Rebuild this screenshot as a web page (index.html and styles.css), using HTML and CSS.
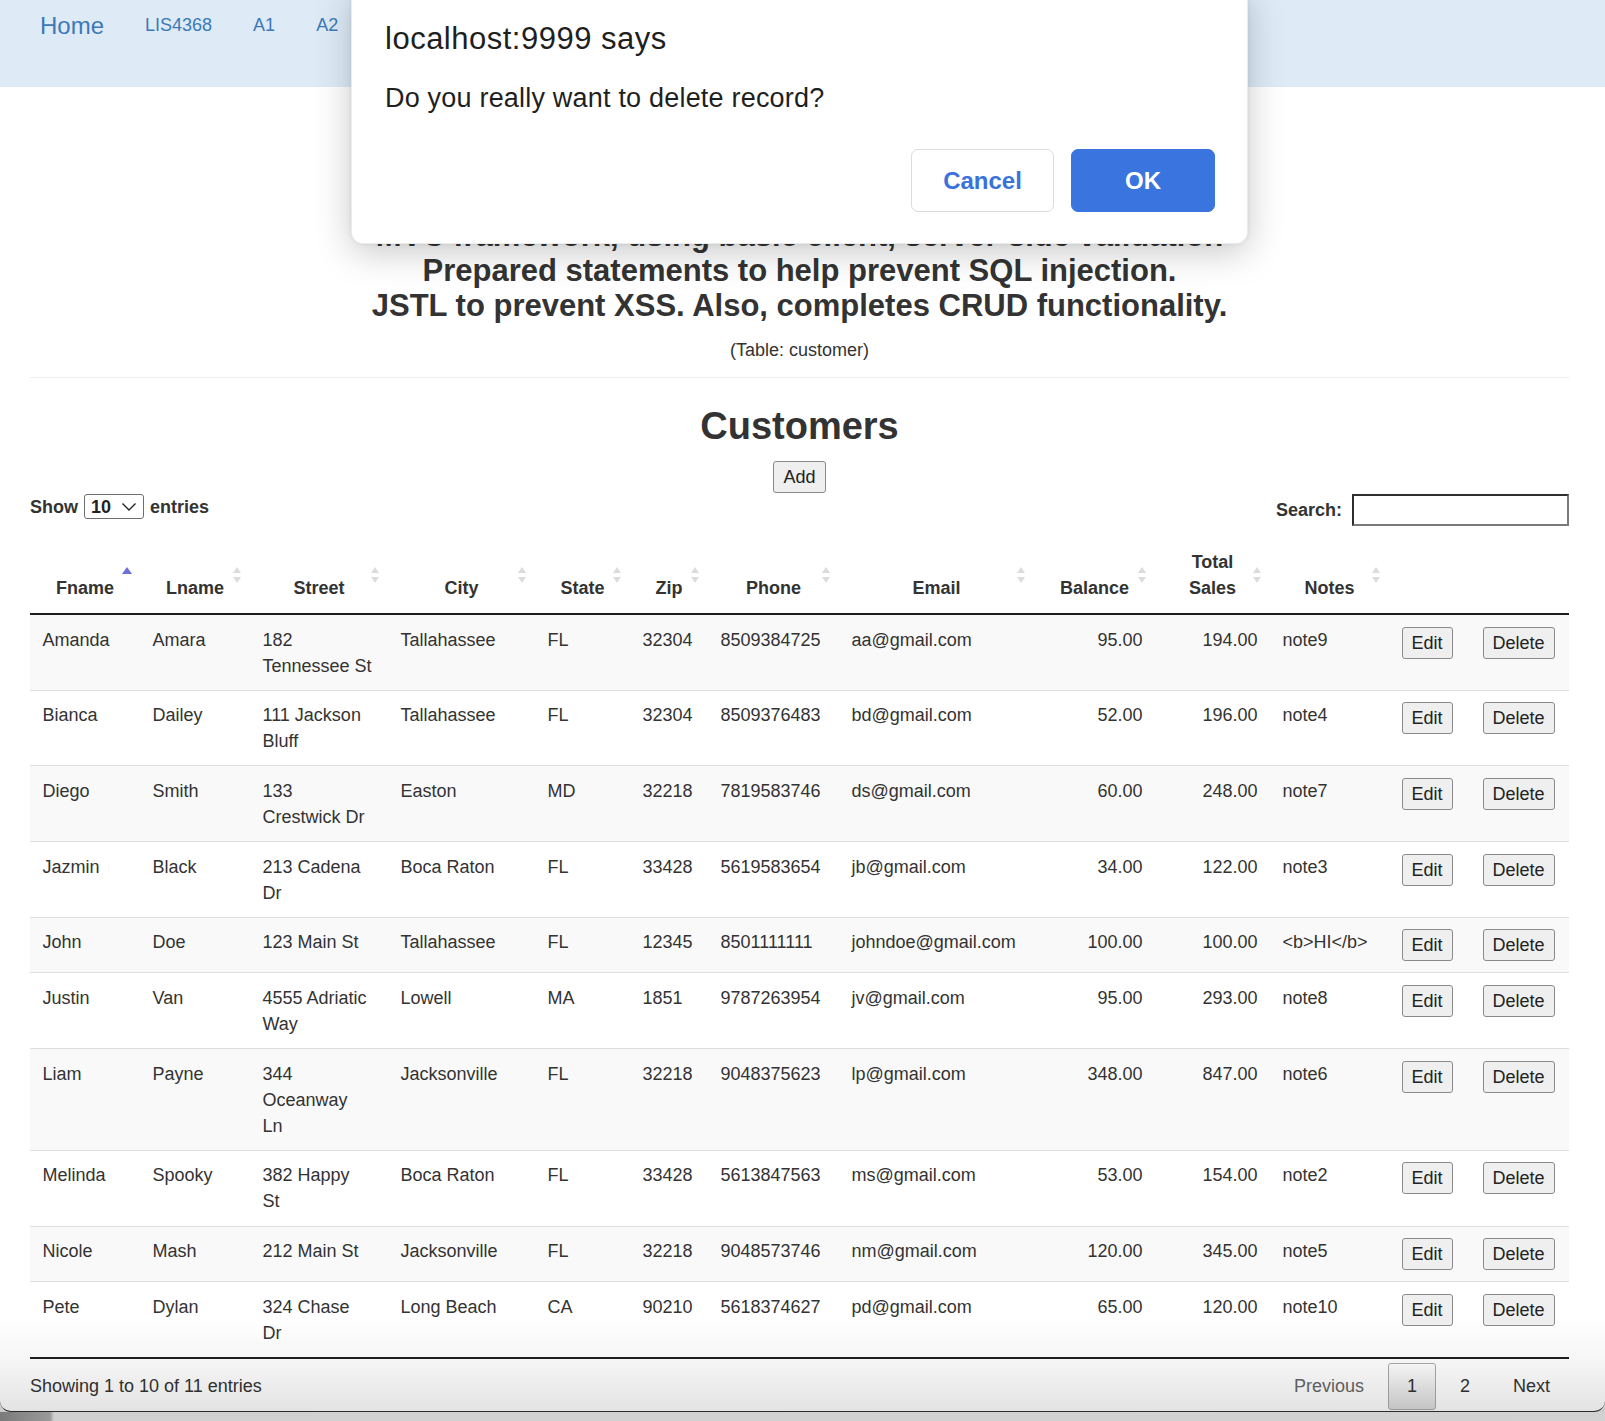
FILE: index.html
```html
<!DOCTYPE html>
<html lang="en">
<head>
<meta charset="utf-8">
<title>Customers</title>
<link rel="stylesheet" href="styles.css">
</head>
<body>
<div class="window">
  <nav class="topnav">
    <a class="brand" href="#">Home</a>
    <a class="navlink" href="#">LIS4368</a>
    <a class="navlink" href="#">A1</a>
    <a class="navlink" href="#">A2</a>
  </nav>

  <main class="page">
    <h3 class="intro">MVC framework, using basic client, server-side validation<br>Prepared statements to help prevent SQL injection.<br>JSTL to prevent XSS. Also, completes CRUD functionality.</h3>
    <p class="table-name">(Table: customer)</p>
    <hr class="rule">
    <h2 class="title">Customers</h2>
    <div class="add-wrap"><button class="btn" type="button">Add</button></div>

    <div class="dt-controls">
      <div class="dt-length">
        <span>Show</span>
        <span class="select"><span>10</span>
          <svg class="chev" width="16" height="10" viewBox="0 0 16 10"><polyline points="1.5,1.5 8,8 14.5,1.5" fill="none" stroke="#222" stroke-width="1.4"/></svg>
        </span>
        <span>entries</span>
      </div>
      <div class="dt-filter">
        <span>Search:</span>
        <input class="search" type="text">
      </div>
    </div>

    <table class="dt">
      <colgroup>
        <col class="c-fname"><col class="c-lname"><col class="c-street"><col class="c-city"><col class="c-state"><col class="c-zip"><col class="c-phone"><col class="c-email"><col class="c-bal"><col class="c-sales"><col class="c-notes"><col class="c-edit"><col class="c-del">
      </colgroup>
      <thead>
        <tr>
          <th>Fname<span class="sort asc"><i class="up"></i></span></th>
          <th>Lname<span class="sort"><i class="up"></i><i class="down"></i></span></th>
          <th>Street<span class="sort"><i class="up"></i><i class="down"></i></span></th>
          <th>City<span class="sort"><i class="up"></i><i class="down"></i></span></th>
          <th>State<span class="sort"><i class="up"></i><i class="down"></i></span></th>
          <th>Zip<span class="sort"><i class="up"></i><i class="down"></i></span></th>
          <th>Phone<span class="sort"><i class="up"></i><i class="down"></i></span></th>
          <th>Email<span class="sort"><i class="up"></i><i class="down"></i></span></th>
          <th>Balance<span class="sort"><i class="up"></i><i class="down"></i></span></th>
          <th>Total Sales<span class="sort"><i class="up"></i><i class="down"></i></span></th>
          <th>Notes<span class="sort"><i class="up"></i><i class="down"></i></span></th>
          <th class="plain"></th>
          <th class="plain"></th>
        </tr>
      </thead>
      <tbody>
        <tr><td>Amanda</td><td>Amara</td><td>182<br>Tennessee St</td><td>Tallahassee</td><td>FL</td><td>32304</td><td>8509384725</td><td>aa@gmail.com</td><td class="num">95.00</td><td class="num">194.00</td><td>note9</td><td><button class="btn" type="button">Edit</button></td><td><button class="btn" type="button">Delete</button></td></tr>
        <tr><td>Bianca</td><td>Dailey</td><td>111 Jackson<br>Bluff</td><td>Tallahassee</td><td>FL</td><td>32304</td><td>8509376483</td><td>bd@gmail.com</td><td class="num">52.00</td><td class="num">196.00</td><td>note4</td><td><button class="btn" type="button">Edit</button></td><td><button class="btn" type="button">Delete</button></td></tr>
        <tr><td>Diego</td><td>Smith</td><td>133<br>Crestwick Dr</td><td>Easton</td><td>MD</td><td>32218</td><td>7819583746</td><td>ds@gmail.com</td><td class="num">60.00</td><td class="num">248.00</td><td>note7</td><td><button class="btn" type="button">Edit</button></td><td><button class="btn" type="button">Delete</button></td></tr>
        <tr><td>Jazmin</td><td>Black</td><td>213 Cadena<br>Dr</td><td>Boca Raton</td><td>FL</td><td>33428</td><td>5619583654</td><td>jb@gmail.com</td><td class="num">34.00</td><td class="num">122.00</td><td>note3</td><td><button class="btn" type="button">Edit</button></td><td><button class="btn" type="button">Delete</button></td></tr>
        <tr><td>John</td><td>Doe</td><td>123 Main St</td><td>Tallahassee</td><td>FL</td><td>12345</td><td>8501111111</td><td>johndoe@gmail.com</td><td class="num">100.00</td><td class="num">100.00</td><td>&lt;b&gt;HI&lt;/b&gt;</td><td><button class="btn" type="button">Edit</button></td><td><button class="btn" type="button">Delete</button></td></tr>
        <tr><td>Justin</td><td>Van</td><td>4555 Adriatic<br>Way</td><td>Lowell</td><td>MA</td><td>1851</td><td>9787263954</td><td>jv@gmail.com</td><td class="num">95.00</td><td class="num">293.00</td><td>note8</td><td><button class="btn" type="button">Edit</button></td><td><button class="btn" type="button">Delete</button></td></tr>
        <tr><td>Liam</td><td>Payne</td><td>344<br>Oceanway<br>Ln</td><td>Jacksonville</td><td>FL</td><td>32218</td><td>9048375623</td><td>lp@gmail.com</td><td class="num">348.00</td><td class="num">847.00</td><td>note6</td><td><button class="btn" type="button">Edit</button></td><td><button class="btn" type="button">Delete</button></td></tr>
        <tr><td>Melinda</td><td>Spooky</td><td>382 Happy<br>St</td><td>Boca Raton</td><td>FL</td><td>33428</td><td>5613847563</td><td>ms@gmail.com</td><td class="num">53.00</td><td class="num">154.00</td><td>note2</td><td><button class="btn" type="button">Edit</button></td><td><button class="btn" type="button">Delete</button></td></tr>
        <tr><td>Nicole</td><td>Mash</td><td>212 Main St</td><td>Jacksonville</td><td>FL</td><td>32218</td><td>9048573746</td><td>nm@gmail.com</td><td class="num">120.00</td><td class="num">345.00</td><td>note5</td><td><button class="btn" type="button">Edit</button></td><td><button class="btn" type="button">Delete</button></td></tr>
        <tr><td>Pete</td><td>Dylan</td><td>324 Chase<br>Dr</td><td>Long Beach</td><td>CA</td><td>90210</td><td>5618374627</td><td>pd@gmail.com</td><td class="num">65.00</td><td class="num">120.00</td><td>note10</td><td><button class="btn" type="button">Edit</button></td><td><button class="btn" type="button">Delete</button></td></tr>
      </tbody>
    </table>

    <div class="dt-footer">
      <div class="dt-info">Showing 1 to 10 of 11 entries</div>
      <div class="dt-paging">
        <span class="pg disabled">Previous</span>
        <span class="pg current">1</span>
        <span class="pg">2</span>
        <span class="pg">Next</span>
      </div>
    </div>
  </main>

  <div class="shade"></div>

  <div class="dialog" role="dialog">
    <div class="dlg-title">localhost:9999 says</div>
    <div class="dlg-msg">Do you really want to delete record?</div>
    <div class="dlg-actions">
      <button class="dlg-btn cancel" type="button">Cancel</button>
      <button class="dlg-btn ok" type="button">OK</button>
    </div>
  </div>
</div>
<div class="under"></div>
</body>
</html>
```

FILE: styles.css
```css
html, body {
  margin: 0;
  padding: 0;
}
body {
  background: #cdcdcd;
  font-family: "Liberation Sans", Arial, Helvetica, sans-serif;
  font-size: 18px;
  line-height: 26px;
  color: #333;
  overflow: hidden;
}

.window {
  position: relative;
  height: 1411px;
  background: #fff;
  border-bottom: 1px solid #2b2b2b;
  border-radius: 0 0 11px 11px;
  overflow: hidden;
}

.under {
  height: 9px;
  background: linear-gradient(to right, #7a7a7a 0, #9a9a9a 50px, #d0d0d0 54px, #d2d2d2 100%);
}

/* nav */
.topnav {
  height: 87px;
  background: #deebf7;
  display: flex;
  align-items: flex-start;
  padding-left: 40px;
  gap: 41px;
}
.topnav a {
  text-decoration: none;
  color: #3b79b7;
}
.brand {
  font-size: 24px;
  line-height: 26px;
  margin-top: 13px;
}
.navlink {
  font-size: 18px;
  line-height: 26px;
  margin-top: 12px;
}

/* page */
.page {
  padding: 0 36px 0 30px;
}
.intro {
  margin: 131px 0 0;
  text-align: center;
  font-size: 31px;
  line-height: 35px;
  font-weight: bold;
  color: #333;
}
.table-name {
  margin: 14px 0 0;
  text-align: center;
  font-size: 18px;
  line-height: 26px;
}
.rule {
  margin: 14px 0 0;
  border: 0;
  border-top: 1px solid #eee;
}
.title {
  margin: 27px 0 0;
  text-align: center;
  font-size: 38px;
  line-height: 42px;
  font-weight: bold;
  color: #333;
}
.add-wrap {
  margin-top: 14px;
  text-align: center;
  height: 32px;
}

.btn {
  font-family: "Liberation Sans", Arial, Helvetica, sans-serif;
  font-size: 18px;
  line-height: 26px;
  color: #222;
  background: #efefef;
  border: 1px solid #8a8a8a;
  border-radius: 3px;
  padding: 2px 9px;
  margin: 0;
  vertical-align: top;
}
.add-wrap .btn {
  padding: 2px 9.5px;
}

/* controls */
.dt-controls {
  margin-top: 1px;
  height: 32px;
  display: flex;
  justify-content: space-between;
  align-items: flex-start;
}
.dt-length {
  display: flex;
  align-items: center;
  gap: 6px;
  height: 25px;
  font-weight: bold;
}
.select {
  box-sizing: border-box;
  width: 60px;
  height: 25px;
  border: 1px solid #6e6e6e;
  border-radius: 3px;
  display: inline-flex;
  align-items: center;
  justify-content: space-between;
  padding: 0 6px 0 6px;
  font-weight: bold;
  color: #222;
}
.chev {
  display: block;
}
.dt-filter {
  display: flex;
  align-items: center;
  gap: 10px;
  height: 32px;
  font-weight: bold;
}
.search {
  box-sizing: border-box;
  width: 217px;
  height: 32px;
  margin: 0;
  border: 2px solid #7a7a7a;
  border-top-color: #2e2e2e;
  border-left-color: #2e2e2e;
  background: #fff;
}

/* table */
.dt {
  margin-top: 10px;
  width: 100%;
  table-layout: fixed;
  border-collapse: collapse;
  border-bottom: 2px solid #1e1e1e;
}
.c-fname { width: 110px; }
.c-lname { width: 110px; }
.c-street { width: 138px; }
.c-city { width: 147px; }
.c-state { width: 95px; }
.c-zip { width: 78px; }
.c-phone { width: 131px; }
.c-email { width: 195px; }
.c-bal { width: 121px; }
.c-sales { width: 115px; }
.c-notes { width: 119px; }
.c-edit { width: 81px; }
.c-del { width: 99px; }

.dt th {
  position: relative;
  padding: 12.5px 22.5px 12.5px;
  text-align: center;
  vertical-align: bottom;
  font-weight: bold;
  line-height: 26px;
  border-bottom: 2px solid #1e1e1e;
}
.sort {
  position: absolute;
  right: 9px;
  top: 50%;
  margin-top: -8px;
  width: 8px;
  height: 16px;
}
.sort i {
  position: absolute;
  left: 0;
  width: 0;
  height: 0;
  border-left: 4px solid transparent;
  border-right: 4px solid transparent;
}
.sort .up {
  top: 0;
  border-bottom: 6px solid #dcdcdc;
}
.sort .down {
  bottom: 0;
  border-top: 6px solid #dcdcdc;
}
.sort.asc .up {
  top: 0;
  left: -1px;
  border-left-width: 5px;
  border-right-width: 5px;
  border-bottom: 7px solid #6a70dc;
}

.dt td {
  padding: 11.5px 12.5px 11.2px;
  vertical-align: top;
  line-height: 26px;
  border-top: 1px solid #dedede;
  white-space: nowrap;
}
.dt tbody tr:first-child td {
  border-top: 0;
}
.dt tbody tr:nth-child(odd) {
  background: #f9f9f9;
}
.dt td.num {
  text-align: right;
}

/* footer */
.dt-footer {
  margin-top: 4px;
  display: flex;
  justify-content: space-between;
  align-items: center;
}
.dt-paging {
  display: flex;
  align-items: center;
}
.pg {
  box-sizing: border-box;
  min-width: 27px;
  padding: 9.5px 18px;
  margin-left: 5px;
  border: 1px solid transparent;
  border-radius: 3px;
  text-align: center;
  color: #333;
  line-height: 26px;
}
.pg.disabled {
  color: #666;
}
.pg.current {
  border-color: #a9a9a9;
  background: linear-gradient(to bottom, #ffffff 0%, #dcdcdc 100%);
}

/* bottom shading */
.shade {
  position: absolute;
  left: 0;
  right: 0;
  bottom: 0;
  height: 95px;
  background: linear-gradient(to bottom, rgba(0,0,0,0) 0%, rgba(0,0,0,0.035) 45%, rgba(0,0,0,0.11) 100%);
  pointer-events: none;
}

/* alert dialog */
.dialog {
  position: absolute;
  left: 351px;
  top: -12px;
  width: 897px;
  height: 256px;
  box-sizing: border-box;
  padding: 32px 32px 33px 33px;
  background: #fff;
  border-radius: 12px;
  border: 1px solid rgba(0,0,0,0.08);
  box-shadow: 0 8px 36px rgba(0,0,0,0.22), 0 0 4px rgba(0,0,0,0.08);
  display: flex;
  flex-direction: column;
  color: #1f1f1f;
}
.dlg-title {
  font-size: 31px;
  line-height: 36px;
  letter-spacing: 0.5px;
}
.dlg-msg {
  margin-top: 25px;
  font-size: 27px;
  line-height: 32px;
  letter-spacing: 0.2px;
}
.dlg-actions {
  margin-top: 35px;
  display: flex;
  justify-content: flex-end;
  gap: 17px;
}
.dlg-btn {
  box-sizing: border-box;
  width: 143px;
  height: 63px;
  border-radius: 7px;
  font-family: "Liberation Sans", Arial, Helvetica, sans-serif;
  font-size: 24px;
  font-weight: bold;
  cursor: pointer;
}
.dlg-btn.cancel {
  background: #fff;
  color: #3a72dc;
  border: 1px solid #d9dce1;
}
.dlg-btn.ok {
  width: 144px;
  background: #3a74de;
  color: #fff;
  border: 1px solid #3a74de;
}
```
